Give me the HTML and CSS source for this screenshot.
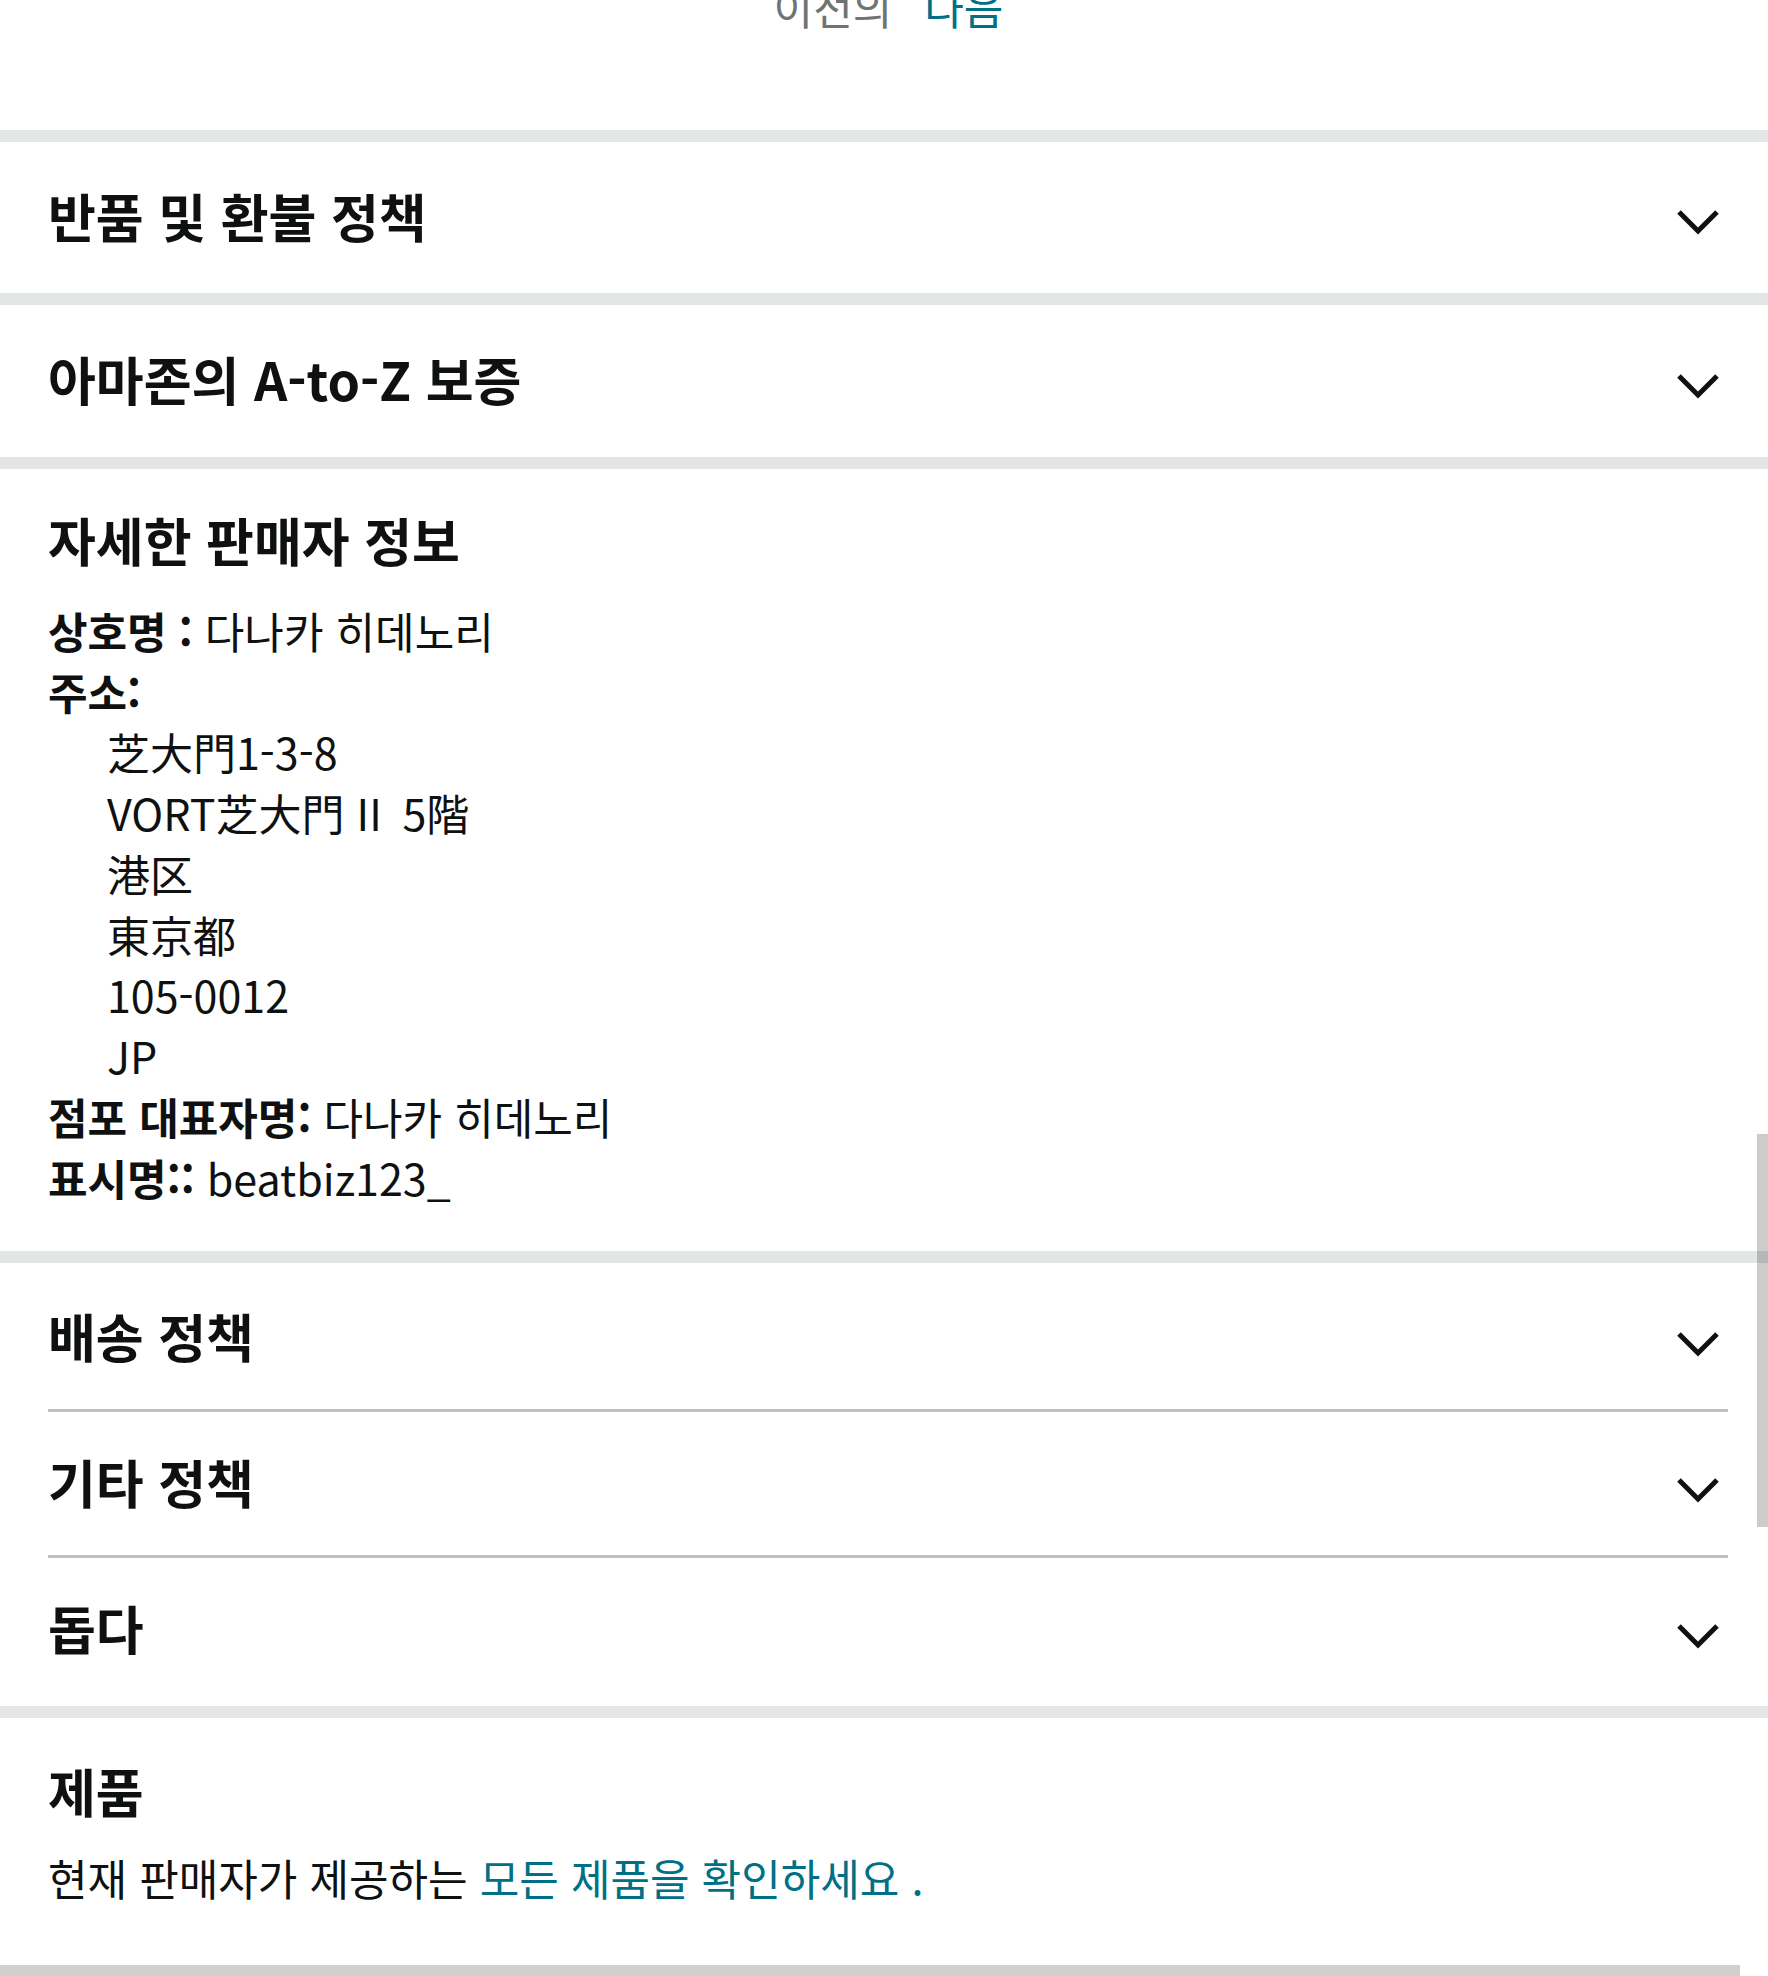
FILE: index.html
```html
<!DOCTYPE html>
<html lang="ko">
<head>
<meta charset="utf-8">
<title>판매자 정보</title>
<link rel="stylesheet" href="styles.css">
</head>
<body>
<div class="page">
  <nav class="pager">
    <span class="prev">이전의</span>
    <a class="next" href="#">다음</a>
  </nav>
  <div class="band"></div>
  <section class="card">
    <div class="row">
      <h3 class="title">반품 및 환불 정책</h3>
      <svg class="chev" viewBox="0 0 42 25" width="42" height="25"><polyline points="2,2 21,21 40,2"/></svg>
    </div>
  </section>
  <div class="band"></div>
  <section class="card">
    <div class="row">
      <h3 class="title">아마존의 A-to-Z 보증</h3>
      <svg class="chev" viewBox="0 0 42 25" width="42" height="25"><polyline points="2,2 21,21 40,2"/></svg>
    </div>
  </section>
  <div class="band"></div>
  <section class="info seller">
    <h3 class="title">자세한 판매자 정보</h3>
    <div class="lines">
      <div class="line"><b>상호명 :</b> 다나카 히데노리</div>
      <div class="line"><b>주소:</b></div>
      <div class="line addr">芝大門1-3-8</div>
      <div class="line addr">VORT芝大門 II&nbsp;&#8201;5階</div>
      <div class="line addr">港区</div>
      <div class="line addr">東京都</div>
      <div class="line addr">105-0012</div>
      <div class="line addr">JP</div>
      <div class="line"><b>점포 대표자명:</b> 다나카 히데노리</div>
      <div class="line"><b>표시명::</b> beatbiz123_</div>
    </div>
  </section>
  <div class="band"></div>
  <section class="group">
    <div class="grow">
      <h3 class="title">배송 정책</h3>
      <svg class="chev" viewBox="0 0 42 25" width="42" height="25"><polyline points="2,2 21,21 40,2"/></svg>
    </div>
    <div class="grow">
      <h3 class="title">기타 정책</h3>
      <svg class="chev" viewBox="0 0 42 25" width="42" height="25"><polyline points="2,2 21,21 40,2"/></svg>
    </div>
    <div class="grow last">
      <h3 class="title">돕다</h3>
      <svg class="chev" viewBox="0 0 42 25" width="42" height="25"><polyline points="2,2 21,21 40,2"/></svg>
    </div>
  </section>
  <div class="band"></div>
  <section class="info products">
    <h3 class="title">제품</h3>
    <p class="line">현재 판매자가 제공하는 <a class="link" href="#">모든 제품을 확인하세요 .</a></p>
  </section>
  <div class="bottom-bar"></div>
  <div class="scrollbar"></div>
</div>
</body>
</html>
```

FILE: styles.css
```css
* { box-sizing: border-box; }

html, body {
  margin: 0;
  padding: 0;
  background: #ffffff;
}

body {
  font-family: "Noto Sans CJK KR", "Noto Sans", sans-serif;
  color: #0f1111;
  font-size: 43px;
  line-height: 60.75px;
  overflow: hidden;
}

.page {
  position: relative;
  width: 1768px;
  height: 1976px;
  overflow: hidden;
}

.pager {
  display: flex;
  justify-content: center;
  gap: 32px;
  margin-top: -24.5px;
  padding: 0 0 93.5px 9px;
}

.prev { color: #6f7373; }

.next {
  color: #007185;
  text-decoration: none;
}

.band {
  height: 12px;
  background: #e3e6e6;
}

.title {
  margin: 0;
  font-size: 52px;
  line-height: 60px;
  font-weight: 700;
}

.card {
  height: 151.5px;
  display: flex;
  align-items: center;
}

.row, .grow {
  flex: 1;
  display: flex;
  align-items: center;
  justify-content: space-between;
  margin: 0 40px 0 48px;
}

.row .title { margin-top: -4px; }

.chev {
  display: block;
  margin: 10px 9px 0 0;
  flex: none;
}

.grow .chev { margin-top: 18px; }

.chev polyline {
  fill: none;
  stroke: #0f1111;
  stroke-width: 5;
  stroke-linejoin: miter;
}

.info {
  padding: 41px 48px 43.5px;
}

.seller .title { margin-bottom: 30px; }

.line { margin: 0; }

.line b { font-weight: 700; }

.addr { padding-left: 59px; }

.group {
  padding: 3px 0 5px;
}

.grow {
  height: 146px;
  padding: 40px 0 43px;
  border-bottom: 3px solid #bdc1c1;
}

.grow.last {
  height: 143px;
  border-bottom: none;
}

.products {
  padding: 43px 48px 57px;
}

.products .title { margin-bottom: 26px; }

.link {
  color: #007185;
  text-decoration: none;
}

.bottom-bar {
  width: 1740px;
  height: 11px;
  background: #d0d0d0;
}

.scrollbar {
  position: absolute;
  top: 1134px;
  right: 0;
  width: 11px;
  height: 393px;
  background: rgba(0, 0, 0, 0.2);
}
```
